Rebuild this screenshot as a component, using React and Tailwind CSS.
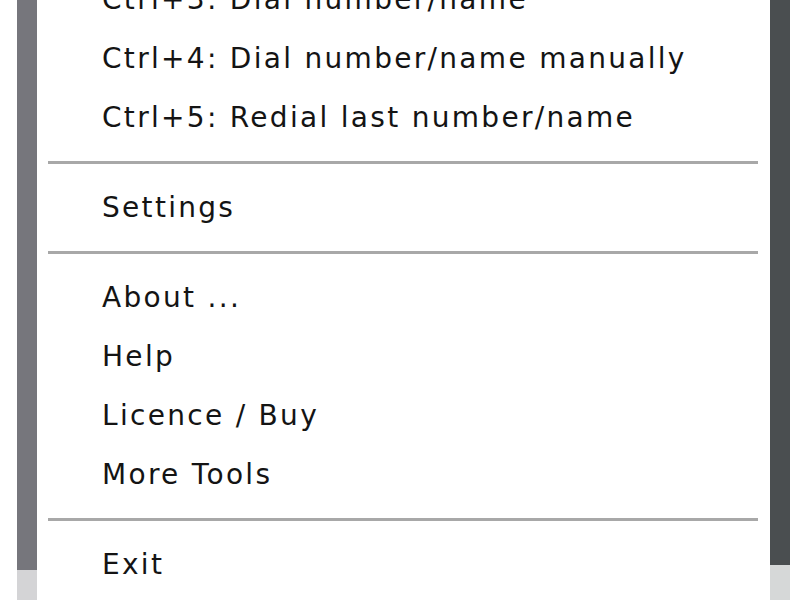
import React from 'react';

const items = [
  { label: 'Ctrl+3: Dial number/name' },
  { label: 'Ctrl+4: Dial number/name manually' },
  { label: 'Ctrl+5: Redial last number/name' },
  { sep: true },
  { label: 'Settings' },
  { sep: true },
  { label: 'About ...' },
  { label: 'Help' },
  { label: 'Licence / Buy' },
  { label: 'More Tools' },
  { sep: true },
  { label: 'Exit' },
];

export default function App() {
  return (
    <div className="flex h-[600px] w-[800px] overflow-hidden bg-white">
      {/* left frame */}
      <div className="w-[17px] bg-white" />
      <div className="flex w-[20px] flex-col">
        <div className="flex-1 bg-[#76767c]" />
        <div className="h-[30px] bg-[#d4d4d6]" />
      </div>

      {/* menu */}
      <div className="flex-1 pl-[11px] pr-[12px]">
        <div className="-mt-[30px] flex flex-col">
          {items.map((item, i) =>
            item.sep ? (
              <div key={i} className="flex h-[31px] items-center">
                <div className="h-[3px] w-full bg-[#a8a8a8]" />
              </div>
            ) : (
              <div
                key={i}
                className="flex h-[59px] items-center whitespace-nowrap pl-[54px] text-[28px] tracking-[2.3px] text-[#141414]"
                style={{ fontFamily: '"DejaVu Sans", Tahoma, sans-serif' }}
              >
                {item.label}
              </div>
            )
          )}
        </div>
      </div>

      {/* right frame */}
      <div className="flex w-[20px] flex-col">
        <div className="flex-1 bg-[#4a4e50]" />
        <div className="h-[35px] bg-[#d6d8d8]" />
      </div>
      <div className="w-[10px] bg-white" />
    </div>
  );
}
